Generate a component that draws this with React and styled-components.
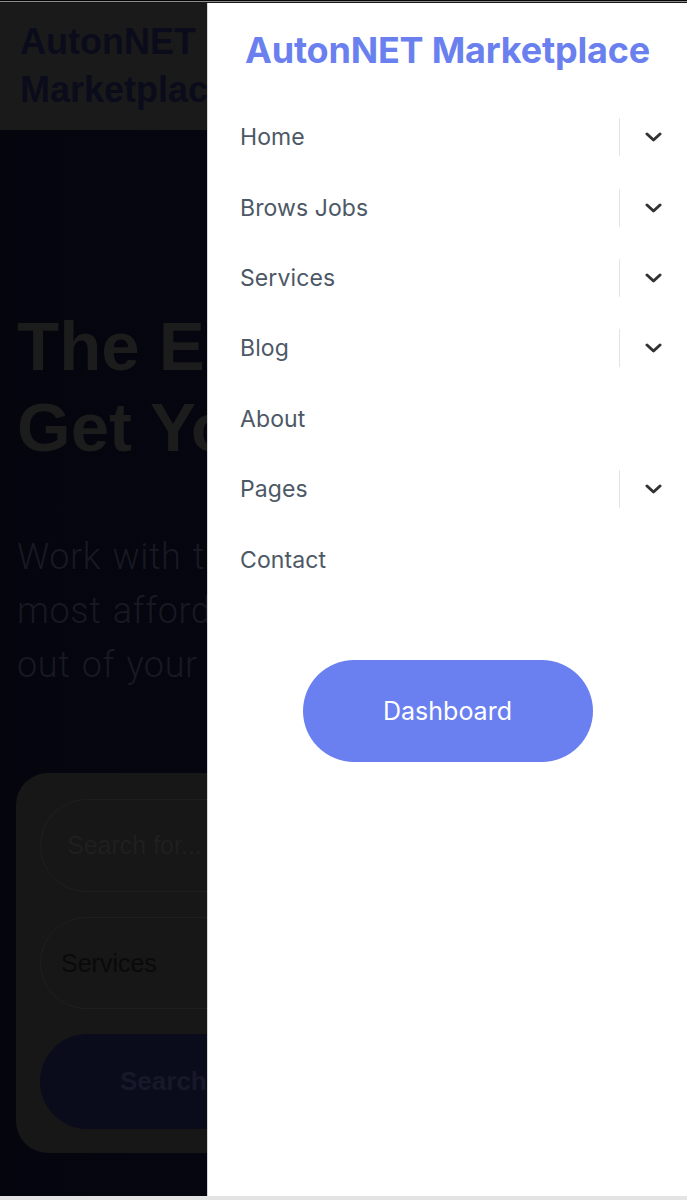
import React from "react";
import styled, { createGlobalStyle } from "styled-components";

const GlobalStyle = createGlobalStyle`
  * { box-sizing: border-box; }
  html, body { margin: 0; padding: 0; background: #e6e6e6; }
  body { font-family: Inter, "Liberation Sans", sans-serif; }
`;

const Screen = styled.div`
  position: relative;
  width: 687px;
  height: 1200px;
  display: flex;
  flex-direction: column;
  overflow: hidden;
`;

const TopEdge = styled.div`
  height: 3px;
  flex: none;
  background: linear-gradient(#050505 0 1px, #8c8c8c 1px 2px, #161616 2px 3px);
`;

const BottomEdge = styled.div`
  height: 4px;
  flex: none;
  background: #e4e4e4;
`;

const Page = styled.div`
  flex: 1;
  min-height: 0;
  background: linear-gradient(90deg, #04050d 0%, #060713 100%);
  overflow: hidden;
`;

const Header = styled.header`
  height: 127px;
  background: #1a1a1a;
  padding: 15px 20px 0;
`;

const Brand = styled.div`
  font-family: "Liberation Sans", Arial, sans-serif;
  font-weight: 700;
  font-size: 36px;
  line-height: 48px;
  color: #0b0c1b;
  width: 200px;
`;

const Hero = styled.section`
  padding: 176px 0 0 17px;
`;

const Heading = styled.h1`
  margin: 0;
  font-family: "Liberation Sans", Arial, sans-serif;
  font-weight: 700;
  font-size: 69px;
  line-height: 81px;
  color: #1c1c1c;
  white-space: nowrap;
`;

const Lead = styled.p`
  margin: 62px 0 0;
  font-family: Roboto, "Liberation Sans", sans-serif;
  font-weight: 300;
  font-size: 36px;
  letter-spacing: 0.6px;
  word-spacing: 2px;
  line-height: 54px;
  color: #181922;
  white-space: nowrap;
`;

const SearchCard = styled.div`
  margin: 81px 0 0 16px;
  width: 640px;
  background: #171717;
  border-radius: 32px;
  padding: 26px 24px 24px;
  display: flex;
  flex-direction: column;
  gap: 25px;
`;

const Field = styled.div`
  height: ${(p) => p.$h}px;
  border: 1px solid #1f1f1f;
  border-radius: 48px;
  display: flex;
  align-items: center;
  padding-left: ${(p) => p.$pad}px;
  font-family: "Liberation Sans", Arial, sans-serif;
  font-size: 25px;
  color: ${(p) => p.$color};
`;

const SearchButton = styled.div`
  height: 95px;
  border-radius: 48px;
  background: #0b0c1b;
  display: flex;
  align-items: center;
  padding-left: 80px;
  font-family: "Liberation Sans", Arial, sans-serif;
  font-weight: 700;
  font-size: 26px;
  color: #17182a;
`;

const Drawer = styled.aside`
  position: absolute;
  top: 3px;
  right: 0;
  bottom: 4px;
  width: 480px;
  background: #ffffff;
  border-left: 1px solid #d6d6d6;
  display: flex;
  flex-direction: column;
`;

const DrawerTitle = styled.div`
  height: 99px;
  display: flex;
  align-items: center;
  justify-content: center;
  padding-bottom: 5px;
  font-family: Inter, "Liberation Sans", sans-serif;
  font-weight: 700;
  font-size: 36px;
  letter-spacing: -0.2px;
  color: #6b80ef;
`;

const NavList = styled.ul`
  list-style: none;
  margin: 0;
  padding: 0;
`;

const NavRow = styled.li`
  height: 70.4px;
  display: flex;
  align-items: center;
`;

const NavLink = styled.span`
  flex: 1;
  padding-left: 32px;
  font-family: Inter, "Liberation Sans", sans-serif;
  font-size: 23px;
  letter-spacing: 0.1px;
  color: #4d5866;
`;

const Toggle = styled.span`
  width: 68px;
  height: 38px;
  border-left: 1px solid #e4e4e4;
  display: flex;
  align-items: center;
  justify-content: center;
  color: #333;
`;

const DashboardButton = styled.button`
  align-self: center;
  margin-top: 65px;
  width: 290px;
  height: 102px;
  border: 0;
  border-radius: 51px;
  background: #6a80f1;
  color: #ffffff;
  font-family: Inter, "Liberation Sans", sans-serif;
  font-size: 25px;
  cursor: pointer;
`;

const Chevron = () => (
  <svg width="17" height="10" viewBox="0 0 17 10" fill="none">
    <path d="M2 2 L8.5 8 L15 2" stroke="currentColor" strokeWidth="3" strokeLinecap="round" strokeLinejoin="round" />
  </svg>
);

const navItems = [
  { label: "Home", sub: true },
  { label: "Brows Jobs", sub: true },
  { label: "Services", sub: true },
  { label: "Blog", sub: true },
  { label: "About", sub: false },
  { label: "Pages", sub: true },
  { label: "Contact", sub: false },
];

export default function App() {
  return (
    <>
      <GlobalStyle />
      <Screen>
        <TopEdge />
        <Page>
          <Header>
            <Brand>AutonNET Marketplace</Brand>
          </Header>
          <Hero>
            <Heading>
              The Easiest Way to
              <br />
              Get Your Work Done
            </Heading>
            <Lead>
              Work with the best freelance talent,
              <br />
              most affordable services to get the best
              <br />
              out of your budget.
            </Lead>
          </Hero>
          <SearchCard>
            <Field $h={93} $pad={26} $color="#1f1f1f">Search for...</Field>
            <Field $h={92} $pad={20} $color="#0a0a0a">Services</Field>
            <SearchButton>Search</SearchButton>
          </SearchCard>
        </Page>
        <BottomEdge />
        <Drawer>
          <DrawerTitle>AutonNET Marketplace</DrawerTitle>
          <NavList>
            {navItems.map((item) => (
              <NavRow key={item.label}>
                <NavLink>{item.label}</NavLink>
                {item.sub && (
                  <Toggle>
                    <Chevron />
                  </Toggle>
                )}
              </NavRow>
            ))}
          </NavList>
          <DashboardButton>Dashboard</DashboardButton>
        </Drawer>
      </Screen>
    </>
  );
}
